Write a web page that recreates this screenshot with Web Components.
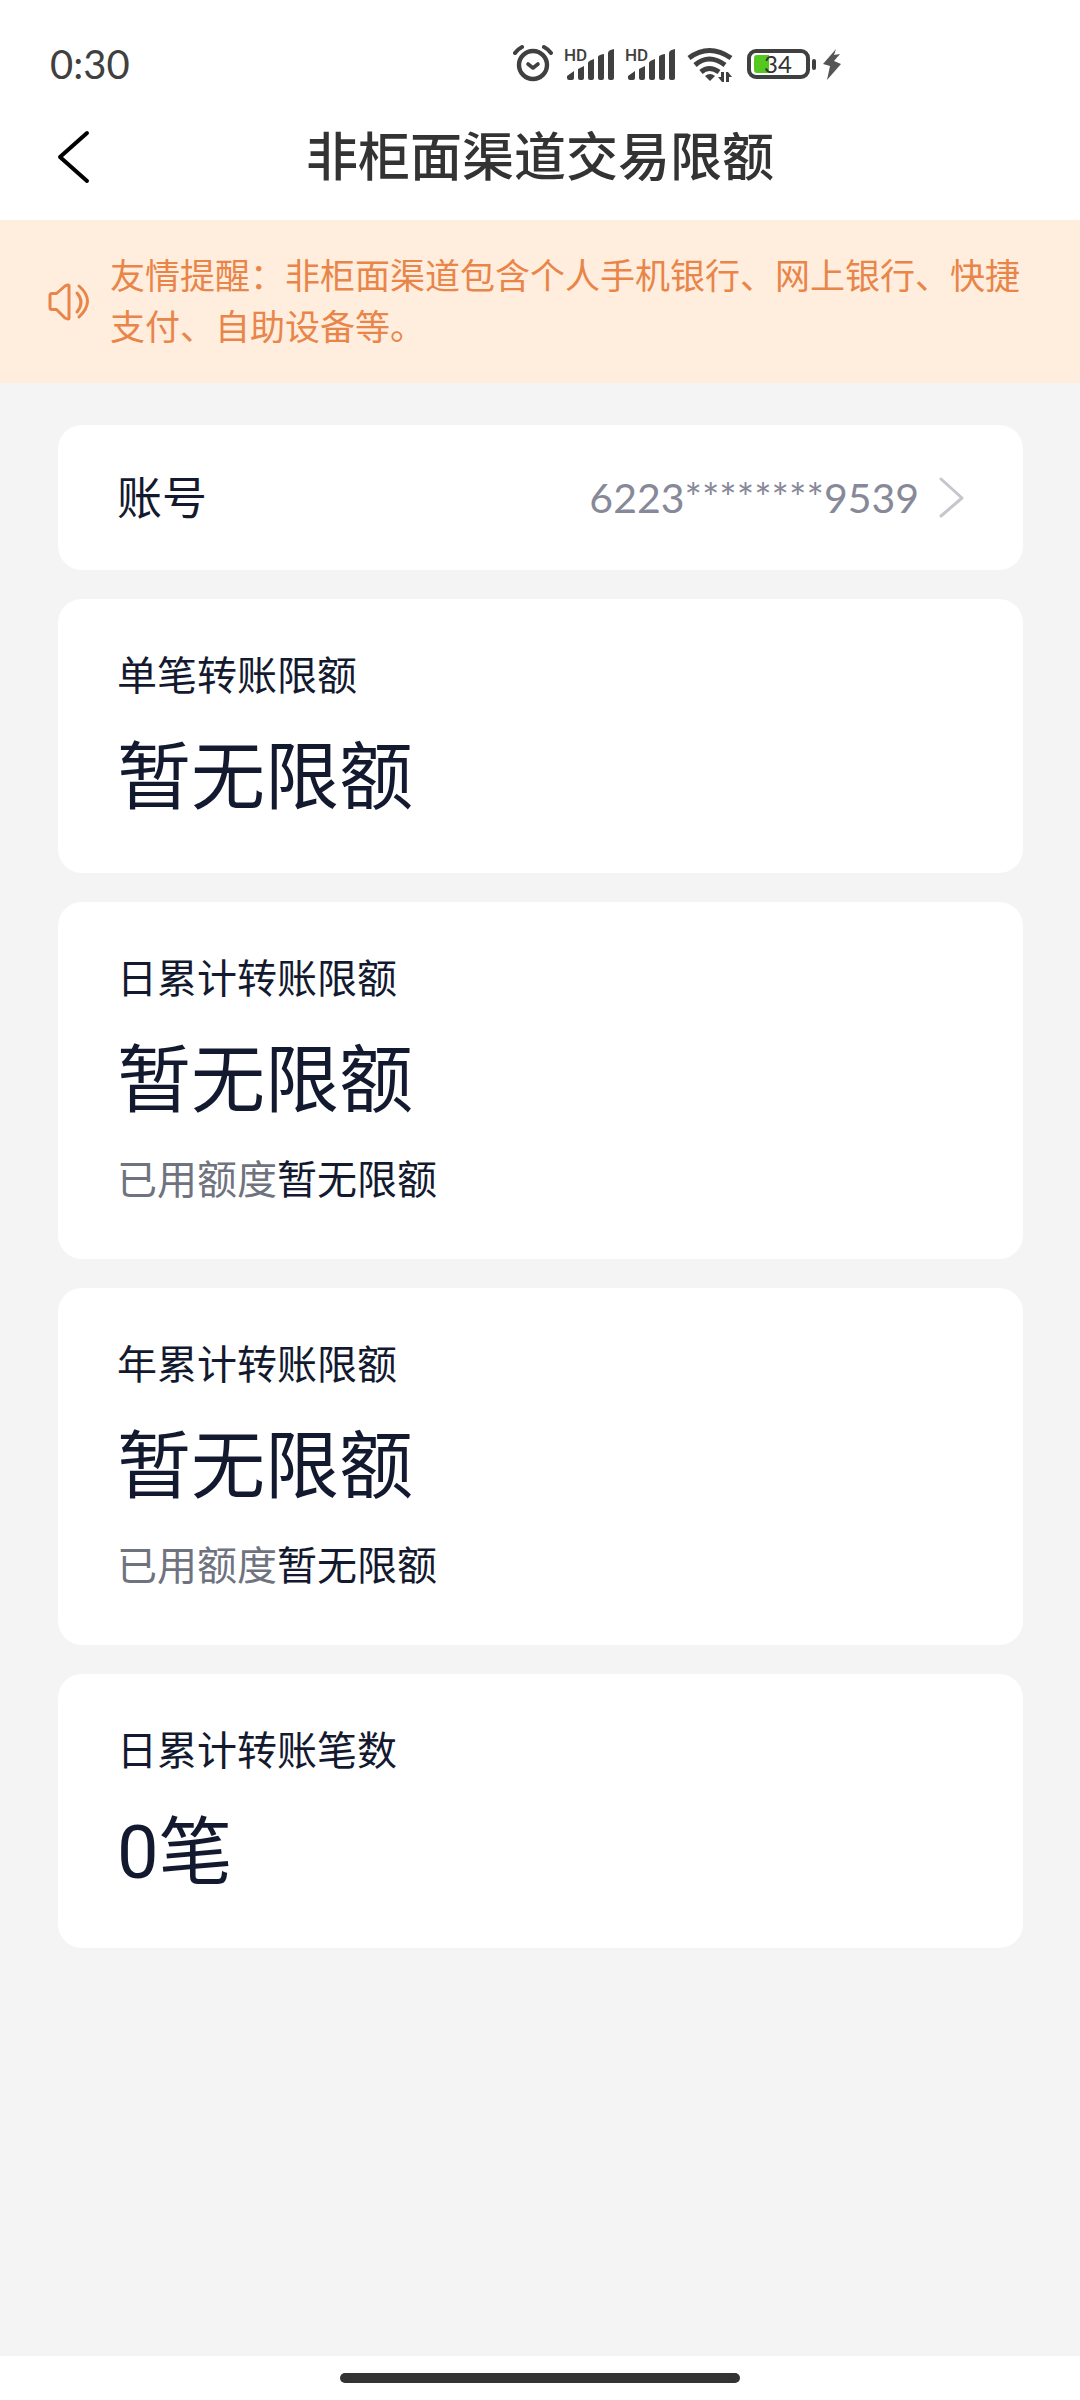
<!DOCTYPE html>
<html lang="zh-CN">
<head>
<meta charset="utf-8">
<meta name="viewport" content="width=device-width, initial-scale=1">
<title>非柜面渠道交易限额</title>
<style>
    body {
        --text-color: #131a30;
        --muted-color: #6f7380;
        --page-background: #f4f4f4;
        margin: 0;
        min-height: 100vh;
        display: flex;
        flex-direction: column;
        font-family: Lato, "Noto Sans CJK SC", sans-serif;
        color: var(--text-color);
        background-color: white;
    }
    main {
        flex: 1;
        display: flex;
        flex-direction: column;
        gap: 29px;
        padding: 42px 57px 42px 58px;
        background-color: var(--page-background);
    }
</style>
</head>
<body>
<status-bar>0:30</status-bar>
<title-bar>非柜面渠道交易限额</title-bar>
<notice-bar>友情提醒：非柜面渠道包含个人手机银行、网上银行、快捷支付、自助设备等。</notice-bar>
<main>
    <account-row number="6223********9539">账号</account-row>
    <limit-card value="暂无限额">单笔转账限额</limit-card>
    <limit-card value="暂无限额" used="暂无限额">日累计转账限额</limit-card>
    <limit-card value="暂无限额" used="暂无限额">年累计转账限额</limit-card>
    <limit-card value="0笔">日累计转账笔数</limit-card>
</main>
<home-indicator></home-indicator>

<script>
const createTemplate = html => {
    const template = document.createElement('template')
    template.innerHTML = html
    return template
}

const signalTemplate = createTemplate(`
    <style>
        :host {
            display: block;
            width: 52px;
            height: 40px;
        }
        svg {
            display: block;
            font-family: Roboto, sans-serif;
        }
    </style>
    <svg width="52" height="40" viewBox="-2 0 52 40" fill="#404040">
        <text x="-1" y="17" font-size="17" font-weight="500">HD</text>
        <path d="M2 36v-4l7-5v7q0 2-2 2H4q-2 0-2-2z"/>
        <path d="M13 25l6-3v12q0 2-2 2h-2q-2 0-2-2z"/>
        <path d="M23 19q0-2 6-4v19q0 2-2 2h-2q-2 0-2-2z"/>
        <path d="M33 13q0-2 6-3v24q0 2-2 2h-2q-2 0-2-2z"/>
        <path d="M43 9q0-3 6-4v29q0 2-2 2h-2q-2 0-2-2z"/>
    </svg>
`)

const statusTemplate = createTemplate(`
    <style>
        :host {
            display: flex;
            align-items: center;
            justify-content: space-between;
            height: 56px;
            padding: 36px 238px 0 50px;
            color: #404040;
            font-size: 40px;
            line-height: 56px;
        }
        .icons {
            display: flex;
            align-items: center;
            gap: 9px;
        }
        svg {
            display: block;
        }
    </style>
    <time><slot></slot></time>
    <div class="icons">
        <svg width="41" height="40" viewBox="0 0 41 40" fill="none" stroke="#404040" stroke-linecap="round" stroke-linejoin="round">
            <circle cx="20" cy="21" r="14" stroke-width="4.400"/>
            <path d="M15 20l5 4 5-4" stroke-width="3.600"/>
            <path d="M2 9q3-4 7-6M38 9q-3-4-7-6" stroke-width="4"/>
        </svg>
        <signal-icon></signal-icon>
        <signal-icon></signal-icon>
        <svg width="50" height="40" viewBox="0 0 50 40" fill="none" stroke="#404040">
            <path d="M4 14q20-15 42 0" stroke-width="5"/>
            <path d="M10 21q14-12 30 0" stroke-width="5"/>
            <path d="M16 28q8-7 18 0" stroke-width="5"/>
            <path d="M20 32q5-4 10 0l-5 5z" fill="#404040" stroke="none"/>
            <path d="M39 28v10h-2l-4-5h3v-5zM41 38V28h2l4 5h-3v5z" fill="#404040" stroke="none"/>
        </svg>
        <svg width="98" height="40" viewBox="0 0 98 40" font-family="Lato, sans-serif">
            <rect x="5" y="7" width="59" height="26" rx="7" fill="none" stroke="#404040" stroke-width="4"/>
            <path d="M13 11h12v18H13q-3 0-3-3V14q0-3 3-3z" fill="#55c81f"/>
            <rect x="68" y="15" width="4" height="11" rx="2" fill="#404040"/>
            <text x="20" y="29" font-size="24" fill="#333333">34</text>
            <path d="M92 5L79 20l7 2-3 14 14-16-7-3 6-7-6 1z" fill="#555555"/>
        </svg>
    </div>
`)

const titleTemplate = createTemplate(`
    <style>
        :host {
            display: grid;
            grid-template-columns: 120px 1fr 120px;
            align-items: center;
            height: 128px;
            color: #333333;
        }
        button {
            justify-self: start;
            margin: 0 0 0 52px;
            padding: 0;
            border: none;
            background: none;
        }
        svg {
            display: block;
        }
        h1 {
            margin: 0;
            text-align: center;
            font-size: 52px;
            font-weight: 500;
            line-height: 64px;
        }
    </style>
    <button type="button" aria-label="返回">
        <svg width="44" height="60" viewBox="0 0 44 60" fill="none" stroke="black" stroke-width="4" stroke-linecap="round" stroke-linejoin="round">
            <path d="M35 7L8 31l27 24"/>
        </svg>
    </button>
    <h1><slot></slot></h1>
`)

const noticeTemplate = createTemplate(`
    <style>
        :host {
            display: flex;
            align-items: center;
            gap: 16px;
            padding: 30px 40px 31px 46px;
            color: #e98549;
            background-color: #ffeddd;
        }
        svg {
            flex: none;
        }
        p {
            margin: 0;
            font-size: 35px;
            line-height: 51px;
        }
    </style>
    <svg width="48" height="40" viewBox="0 0 48 40" fill="none" stroke="currentColor" stroke-width="3" stroke-linejoin="round" stroke-linecap="round">
        <path d="M6 12.500h4.500L19 5q4-2 4 0v32q0 2-4 0l-8.500-8.500H6q-2 0-2-2v-12q0-2 2-2z"/>
        <path d="M31 12q8 9 0 19M33 5q17 15 0 31"/>
    </svg>
    <p><slot></slot></p>
`)

const accountTemplate = createTemplate(`
    <style>
        :host {
            display: block;
        }
        button {
            display: flex;
            align-items: center;
            width: 100%;
            height: 145px;
            padding: 0 56px 0 59px;
            border: none;
            border-radius: 24px;
            font: inherit;
            line-height: 60px;
            color: var(--text-color);
            background-color: white;
        }
        .label {
            flex: 1;
            text-align: left;
            font-size: 45px;
        }
        .number {
            font-size: 41px;
            color: #878999;
        }
        svg {
            margin-left: 16px;
        }
    </style>
    <button type="button">
        <span class="label"><slot></slot></span>
        <span class="number"></span>
        <svg width="32" height="44" viewBox="0 0 32 44" fill="none" stroke="#c6c6ce" stroke-width="3" stroke-linecap="round" stroke-linejoin="round">
            <path d="M6 3l21 19L6 40"/>
        </svg>
    </button>
`)

const limitTemplate = createTemplate(`
    <style>
        :host {
            display: block;
            padding: 48px 59px 43px;
            border-radius: 24px;
            background-color: white;
        }
        h2, p {
            margin: 0;
            font-size: 40px;
            font-weight: 400;
            line-height: 56px;
        }
        .value {
            margin-top: 23px;
            font-family: Roboto, "Noto Sans CJK SC", sans-serif;
            font-size: 74px;
            line-height: 104px;
        }
        .used {
            margin: 18px 0 9px;
        }
        .used span {
            color: var(--muted-color);
        }
    </style>
    <h2><slot></slot></h2>
    <p class="value"></p>
`)

const homeTemplate = createTemplate(`
    <style>
        :host {
            display: flex;
            justify-content: center;
            padding: 17px 0;
            background-color: white;
        }
        div {
            width: 400px;
            height: 10px;
            border-radius: 5px;
            background-color: #333333;
        }
    </style>
    <div></div>
`)

class TemplateElement extends HTMLElement {
    constructor(template) {
        super()
        this.attachShadow({ mode: 'open' })
        this.shadowRoot.appendChild(template.content.cloneNode(true))
    }
}

class SignalIcon extends TemplateElement {
    constructor() { super(signalTemplate) }
}

class StatusBar extends TemplateElement {
    constructor() { super(statusTemplate) }
}

class TitleBar extends TemplateElement {
    constructor() { super(titleTemplate) }
}

class NoticeBar extends TemplateElement {
    constructor() { super(noticeTemplate) }
}

class AccountRow extends TemplateElement {
    constructor() { super(accountTemplate) }

    connectedCallback() {
        this.shadowRoot.querySelector('.number').textContent = this.getAttribute('number')
    }
}

class LimitCard extends TemplateElement {
    constructor() { super(limitTemplate) }

    connectedCallback() {
        this.shadowRoot.querySelector('.value').textContent = this.getAttribute('value')

        // the used amount is only there for accumulated limits
        const used = this.getAttribute('used')
        if (used && !this.shadowRoot.querySelector('.used')) {
            const p = document.createElement('p')
            p.className = 'used'
            const caption = document.createElement('span')
            caption.textContent = '已用额度'
            p.append(caption, used)
            this.shadowRoot.appendChild(p)
        }
    }
}

class HomeIndicator extends TemplateElement {
    constructor() { super(homeTemplate) }
}

customElements.define('signal-icon', SignalIcon)
customElements.define('status-bar', StatusBar)
customElements.define('title-bar', TitleBar)
customElements.define('notice-bar', NoticeBar)
customElements.define('account-row', AccountRow)
customElements.define('limit-card', LimitCard)
customElements.define('home-indicator', HomeIndicator)
</script>
</body>
</html>
